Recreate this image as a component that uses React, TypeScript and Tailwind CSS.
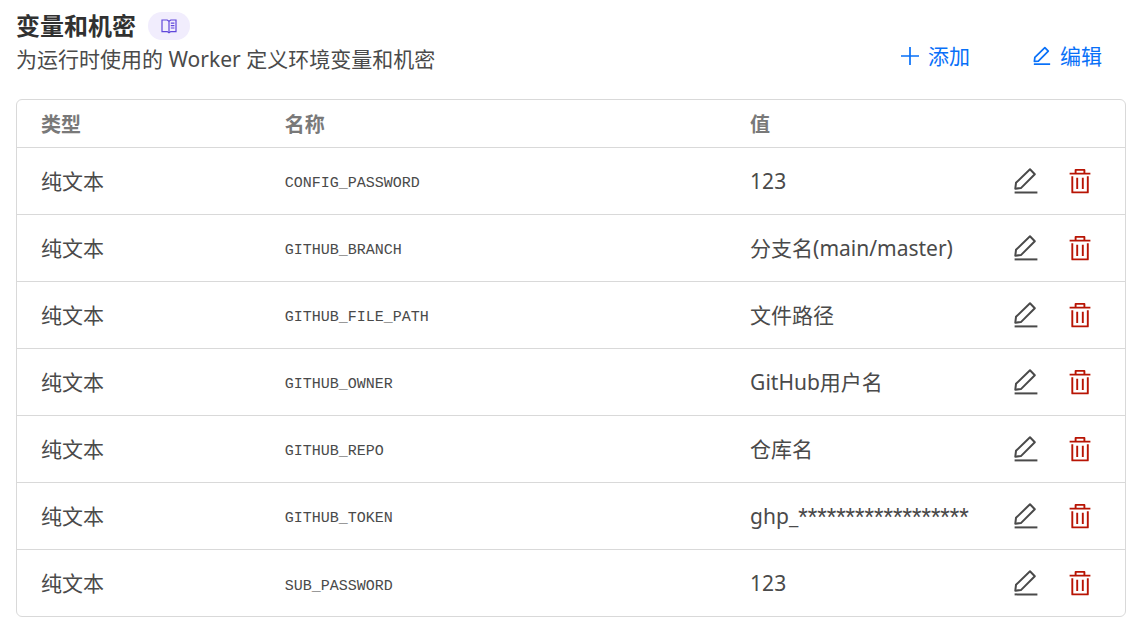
const variables = [
  { name: 'CONFIG_PASSWORD', value: '123' },
  { name: 'GITHUB_BRANCH', value: '分支名(main/master)' },
  { name: 'GITHUB_FILE_PATH', value: '文件路径' },
  { name: 'GITHUB_OWNER', value: 'GitHub用户名' },
  { name: 'GITHUB_REPO', value: '仓库名' },
  { name: 'GITHUB_TOKEN', value: 'ghp_', masked: '******************' },
  { name: 'SUB_PASSWORD', value: '123' },
];

function PencilIcon({ className }: { className: string }) {
  return (
    <svg viewBox="0 0 28 28" className={className} fill="none" stroke="currentColor" aria-hidden="true">
      <path d="M3.3 21.7 4 15.8 18 2.3 22.8 7.2 8.9 21.1Z" strokeLinejoin="round" />
      <path d="M2.6 25.4H25.4" />
    </svg>
  );
}

function TrashIcon() {
  return (
    <svg viewBox="0 0 28 28" className="size-7" fill="none" stroke="currentColor" strokeWidth="1.9" aria-hidden="true">
      <path d="M3.6 6.6H24.4M9.6 6.4V2.9H18.4V6.4" strokeLinejoin="round" />
      <path d="M6.3 9.2V25.4H21.8V9.2" strokeLinejoin="round" />
      <path d="M11.2 10.8V22M16.8 10.8V22" />
    </svg>
  );
}

function PlusIcon() {
  return (
    <svg viewBox="0 0 20 20" className="size-5" fill="none" stroke="currentColor" strokeWidth="1.7" aria-hidden="true">
      <path d="M10 1V19M1 10H19" />
    </svg>
  );
}

function BookIcon() {
  return (
    <svg viewBox="0 0 16 16" className="size-4" fill="none" stroke="currentColor" strokeWidth="1.2" aria-hidden="true">
      <path d="M1 2H6.2L8 3.2 9.8 2H15V13.6H9.8L8 14.8 6.2 13.6H1Z" />
      <path d="M8 3.2V14.8M9.8 5.2H13.4M9.8 7.6H13.4M9.8 10H13.4" />
    </svg>
  );
}

export default function App() {
  return (
    <main className="bg-white px-4 pt-3 pb-6 pr-5 font-['Noto_Sans','Noto_Sans_CJK_SC',sans-serif] text-[21px] text-[#4a4a4a]">
      <header className="flex items-start justify-between pr-6">
        <div>
          <div className="flex items-center gap-3">
            <h1 className="text-2xl leading-7 font-bold text-[#313131]">变量和机密</h1>
            <a href="#docs" aria-label="文档" className="flex h-7 w-[42px] items-center justify-center rounded-full bg-[#f1edfd] text-[#6047db]">
              <BookIcon />
            </a>
          </div>
          <p className="mt-[3px] leading-8">为运行时使用的 Worker 定义环境变量和机密</p>
        </div>
        <div className="flex gap-[62px] pt-7 text-[#0870f8]">
          <button type="button" className="flex items-center gap-2 leading-8">
            <PlusIcon />
            添加
          </button>
          <button type="button" className="flex items-center gap-2 leading-8">
            <PencilIcon className="size-5 stroke-[2.4]" />
            编辑
          </button>
        </div>
      </header>

      <div className="mt-6 overflow-hidden rounded-md border border-[#d9d9d9]">
        <table className="w-full table-fixed border-collapse text-left">
          <colgroup>
            <col className="w-[22%]" />
            <col className="w-[42%]" />
            <col className="w-[24%]" />
            <col className="w-[12%]" />
          </colgroup>
          <thead>
            <tr className="h-[47px] text-xl text-[#797979]">
              <th className="px-6 pt-1 font-bold">类型</th>
              <th className="px-6 pt-1 font-bold">名称</th>
              <th className="px-6 pt-1 font-bold">值</th>
              <td />
            </tr>
          </thead>
          <tbody>
            {variables.map(({ name, value, masked }) => (
              <tr key={name} className="h-[67px] border-t border-[#d9d9d9]">
                <td className="px-6 pt-0.5">纯文本</td>
                <td className="px-6 pt-2 font-['Liberation_Mono',monospace] text-[15px]">{name}</td>
                <td className="px-6 pt-0.5 whitespace-nowrap">
                  {value}
                  {masked && <span className="font-[Roboto,sans-serif] text-[22px] leading-none">{masked}</span>}
                </td>
                <td className="pr-[31px]">
                  <div className="flex justify-end gap-[26px]">
                    <button type="button" aria-label={`编辑 ${name}`}>
                      <PencilIcon className="size-7 stroke-2" />
                    </button>
                    <button type="button" aria-label={`删除 ${name}`} className="text-[#b81404]">
                      <TrashIcon />
                    </button>
                  </div>
                </td>
              </tr>
            ))}
          </tbody>
        </table>
      </div>
    </main>
  );
}
